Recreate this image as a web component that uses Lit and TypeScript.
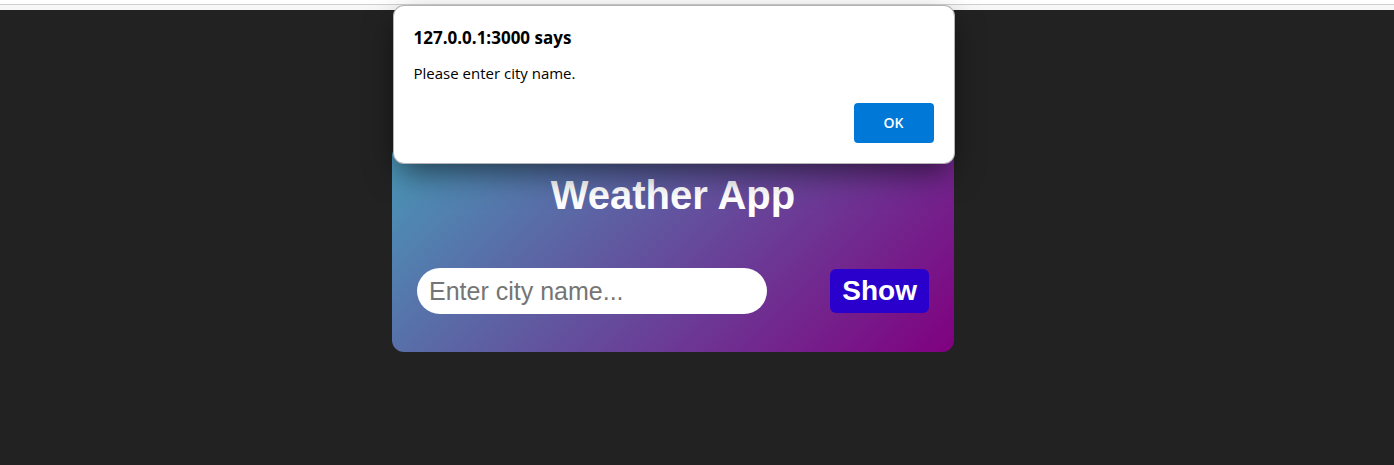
import { LitElement, html, css } from "lit";
import { customElement, state } from "lit/decorators.js";

@customElement("alert-dialog")
class AlertDialog extends LitElement {
  static styles = css`
    :host { display: block; }
    .dialog {
      box-sizing: border-box;
      padding: 20px;
      background: #fff;
      border-radius: 10px;
      box-shadow: 0 0 0 1px #b4b4b8, 0 12px 32px -4px rgba(0, 0, 0, 0.6);
      font-family: "Segoe UI", "Open Sans", "Noto Sans", sans-serif;
      color: #000;
      display: flex;
      flex-direction: column;
    }
    .origin { margin: 0; font-size: 17px; line-height: 24px; font-weight: 700; }
    .message { margin: 12px 0 0; font-size: 15px; line-height: 22px; }
    .ok {
      align-self: flex-end;
      width: 80px;
      height: 40px;
      margin-top: 19px;
      padding: 0;
      border: 0;
      border-radius: 4px;
      background: #0078d7;
      color: #fff;
      font: 600 14px/20px "Segoe UI", "Open Sans", "Noto Sans", sans-serif;
    }
  `;

  render() {
    return html`
      <section class="dialog" role="alertdialog" aria-labelledby="origin" aria-describedby="message">
        <h2 class="origin" id="origin">127.0.0.1:3000 says</h2>
        <p class="message" id="message">Please enter city name.</p>
        <button class="ok" type="button" @click=${() => this.dispatchEvent(new Event("dismiss"))}>OK</button>
      </section>
    `;
  }
}

@customElement("app-root")
class AppRoot extends LitElement {
  static styles = css`
    :host {
      display: flex;
      flex-direction: column;
      min-height: 100vh;
      background: #222;
      font-family: Arial, "Liberation Sans", sans-serif;
      position: relative;
    }
    .chrome {
      box-sizing: border-box;
      height: 10px;
      padding-top: 4px;
      background: #fff;
    }
    .toolbar { height: 5px; border-top: 1px solid #d0d0d0; background: #f7f7f7; }
    .stage {
      display: flex;
      justify-content: center;
      padding: 134px 48px 24px 0;
    }
    .card {
      box-sizing: border-box;
      width: 562px;
      max-width: 100%;
      padding: 28px 25px 38px;
      border-radius: 12px;
      background: linear-gradient(135deg, #4999b8, #800080);
    }
    .title {
      margin: 0;
      color: #fff;
      font-size: 40px;
      line-height: 46px;
      text-align: center;
    }
    .search {
      display: flex;
      align-items: center;
      justify-content: space-between;
      gap: 16px;
      margin-top: 50px;
    }
    .city {
      box-sizing: border-box;
      width: 350px;
      min-width: 0;
      height: 46px;
      padding: 0 12px;
      border: 0;
      border-radius: 23px;
      background: #fff;
      color: #222;
      font: 25px/30px Arial, "Liberation Sans", sans-serif;
    }
    .city::placeholder { color: #757575; }
    .show {
      height: 44px;
      padding: 0 12px;
      border: 0;
      border-radius: 6px;
      background: #2a00cc;
      color: #fff;
      font: bold 28px/32px Arial, "Liberation Sans", sans-serif;
    }
    .overlay {
      position: absolute;
      top: 6px;
      left: 0;
      right: 47px;
      display: flex;
      justify-content: center;
    }
    .alert { width: 560px; max-width: 100%; }
  `;

  @state() private alertOpen = true;

  render() {
    return html`
      <div class="chrome"><div class="toolbar"></div></div>
      <main class="stage">
        <div class="card">
          <h1 class="title">Weather App</h1>
          <form class="search" @submit=${this.submit}>
            <input class="city" type="text" aria-label="City name" placeholder="Enter city name..." />
            <button class="show" type="submit">Show</button>
          </form>
        </div>
      </main>
      ${this.alertOpen
        ? html`<div class="overlay">
            <alert-dialog class="alert" @dismiss=${() => (this.alertOpen = false)}></alert-dialog>
          </div>`
        : null}
    `;
  }

  private submit(e: Event) {
    e.preventDefault();
    this.alertOpen = true;
  }
}
